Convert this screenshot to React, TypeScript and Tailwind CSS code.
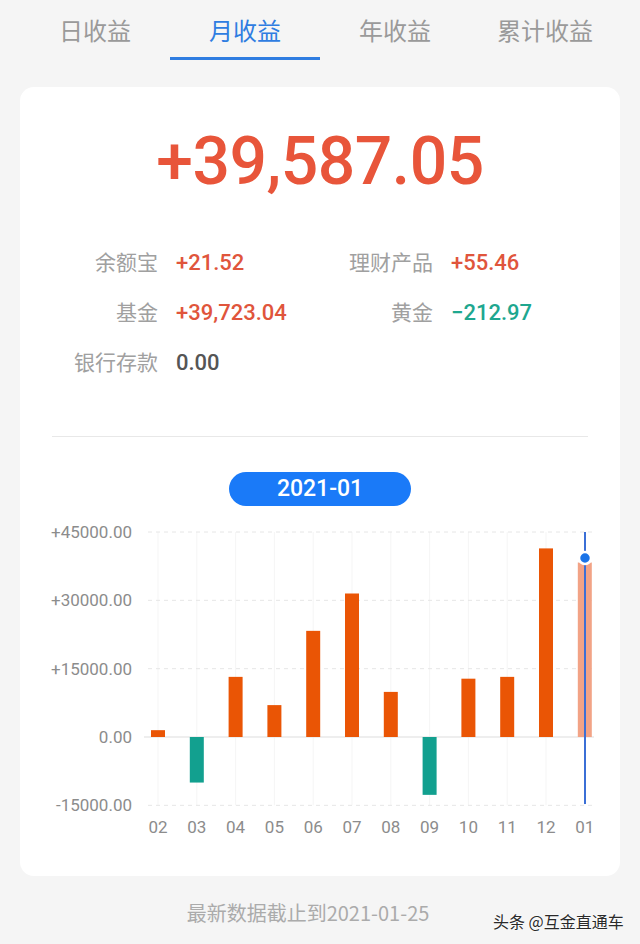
import React from "react";

const tabs = ["日收益", "月收益", "年收益", "累计收益"];

const bars: { m: string; v: number }[] = [
  { m: "02", v: 1500 },
  { m: "03", v: -10000 },
  { m: "04", v: 13200 },
  { m: "05", v: 7000 },
  { m: "06", v: 23300 },
  { m: "07", v: 31500 },
  { m: "08", v: 9900 },
  { m: "09", v: -12700 },
  { m: "10", v: 12800 },
  { m: "11", v: 13200 },
  { m: "12", v: 41400 },
  { m: "01", v: 38300 },
];

// SVG coords: page x = 20 + sx, page y = 506 + sy
const zeroY = 737 - 506;
const k = 205 / 45000;
const yOf = (v: number) => zeroY - v * k;
const cx = (i: number) => 138 + i * 38.8;

function Chart() {
  const ticks = [45000, 30000, 15000, 0, -15000];
  const fmt = (t: number) => (t > 0 ? "+" + t + ".00" : t === 0 ? "0.00" : t + ".00");
  return (
    <svg width={600} height={370} viewBox="0 0 600 370" className="block">
      {bars.map((b, i) => (
        <line key={"v" + i} x1={cx(i)} x2={cx(i)} y1={yOf(45000)} y2={yOf(-15000)} stroke="#f5f5f5" strokeWidth={1} />
      ))}
      {ticks.map((t) => (
        <g key={t}>
          <text
            x={112}
            y={yOf(t) + 6}
            textAnchor="end"
            fontSize={17}
            fill="#8c8c8c"
            fontFamily="Roboto, sans-serif"
          >
            {fmt(t)}
          </text>
          {t === 0 ? (
            <line x1={124} x2={574} y1={yOf(t)} y2={yOf(t)} stroke="#e8e8e8" strokeWidth={1.5} />
          ) : (
            <line x1={128} x2={573} y1={yOf(t)} y2={yOf(t)} stroke="#e6e6e6" strokeWidth={1} strokeDasharray="4 4" />
          )}
        </g>
      ))}
      {bars.map((b, i) => {
        const last = i === bars.length - 1;
        const fill = b.v < 0 ? "#12a08f" : last ? "#f2a386" : "#ea5505";
        const top = b.v >= 0 ? yOf(b.v) : zeroY;
        const h = Math.abs(b.v) * k;
        return <rect key={b.m} x={cx(i) - 7} y={top} width={14} height={h} fill={fill} />;
      })}
      {bars.map((b, i) => (
        <text
          key={"l" + b.m}
          x={cx(i)}
          y={327}
          textAnchor="middle"
          fontSize={17}
          fill="#8c8c8c"
          fontFamily="Roboto, sans-serif"
        >
          {b.m}
        </text>
      ))}
      <line x1={565} x2={565} y1={26} y2={298} stroke="#3b6fd6" strokeWidth={2} />
      <circle cx={565} cy={52} r={6} fill="#1a73e8" stroke="#ffffff" strokeWidth={2.5} />
    </svg>
  );
}

function Row({
  l1,
  v1,
  c1,
  l2,
  v2,
  c2,
}: {
  l1: string;
  v1: string;
  c1: string;
  l2?: string;
  v2?: string;
  c2?: string;
}) {
  return (
    <div className="flex h-[50px] items-center">
      <div className="w-[138px] text-right text-[21px] text-[#a0a0a0] font-['Noto_Sans_CJK_SC',sans-serif]">{l1}</div>
      <div className={`ml-[18px] w-[119px] text-[22px] font-medium font-['Roboto',sans-serif] ${c1}`}>{v1}</div>
      {l2 && (
        <>
          <div className="w-[138px] text-right text-[21px] text-[#a0a0a0] font-['Noto_Sans_CJK_SC',sans-serif]">{l2}</div>
          <div className={`ml-[18px] text-[22px] font-medium font-['Roboto',sans-serif] ${c2}`}>{v2}</div>
        </>
      )}
    </div>
  );
}

export default function App() {
  return (
    <div className="relative w-[640px] h-[944px] bg-[#f5f5f5] overflow-hidden font-['Roboto','Noto_Sans_CJK_SC',sans-serif]">
      <div className="mx-[20px] grid grid-cols-4">
        {tabs.map((t, i) => (
          <div
            key={t}
            className={`flex h-[60px] items-center justify-center pt-[2px] border-b-[3px] text-[24px] font-['Noto_Sans_CJK_SC',sans-serif] ${
              i === 1 ? "border-[#2f7de1] text-[#2f7de1]" : "border-transparent text-[#9a9a9a]"
            }`}
          >
            {t}
          </div>
        ))}
      </div>

      <div className="mx-[20px] mt-[27px] h-[789px] rounded-[14px] bg-white">
        <div className="flex h-[150px] items-center justify-center">
          <div className="text-[66px] leading-none font-medium tracking-[-0.5px] text-[#e8553a] font-['Roboto',sans-serif]">
            +39,587.05
          </div>
        </div>
        <Row l1="余额宝" v1="+21.52" c1="text-[#e0553c]" l2="理财产品" v2="+55.46" c2="text-[#e0553c]" />
        <Row l1="基金" v1="+39,723.04" c1="text-[#e0553c]" l2="黄金" v2="−212.97" c2="text-[#1ea78f]" />
        <Row l1="银行存款" v1="0.00" c1="text-[#555555]" />
        <div className="mx-[32px] mt-[49px] h-px bg-[#e8e8e8]" />
        <div className="mt-[35px] flex justify-center">
          <div className="flex h-[34px] w-[182px] items-center justify-center rounded-full bg-[#1a7af8] text-[23px] font-medium text-white font-['Roboto',sans-serif]">
            2021-01
          </div>
        </div>
        <Chart />
      </div>

      <div className="mt-[22px] pr-[24px] text-center text-[20px] text-[#ababab] font-['Noto_Sans_CJK_SC',sans-serif]">
        最新数据截止到2021-01-25
      </div>

      <div className="absolute left-[493px] top-[909px] text-[16px] text-[#2a2a2a] font-['Noto_Sans_CJK_SC',sans-serif] [text-shadow:0_0_2px_#fff,0_0_2px_#fff]">
        头条 @互金直通车
      </div>
    </div>
  );
}
